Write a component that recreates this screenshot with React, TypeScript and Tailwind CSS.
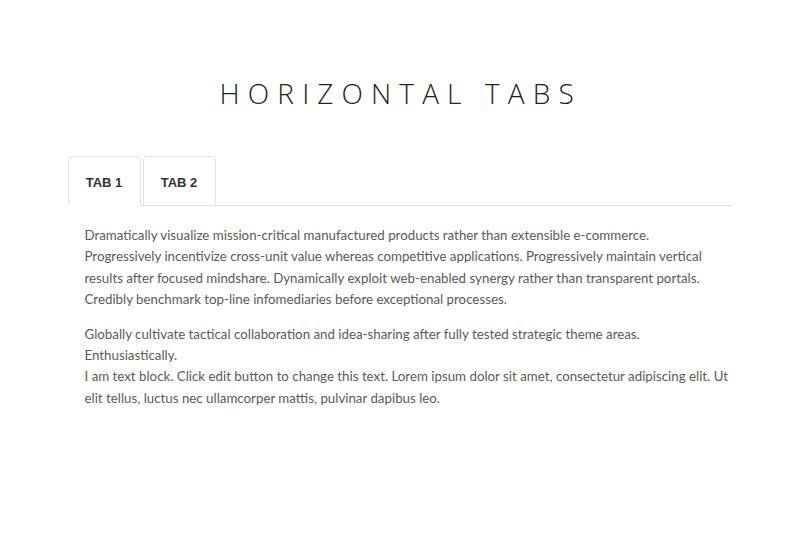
import { useState } from "react";

const TABS = [
  {
    label: "TAB 1",
    paras: [
      [
        "Dramatically visualize mission-critical manufactured products rather than extensible e-commerce.",
        "Progressively incentivize cross-unit value whereas competitive applications. Progressively maintain vertical results after focused mindshare. Dynamically exploit web-enabled synergy rather than transparent portals. Credibly benchmark top-line infomediaries before exceptional processes.",
      ],
      [
        "Globally cultivate tactical collaboration and idea-sharing after fully tested strategic theme areas. Enthusiastically.",
        "I am text block. Click edit button to change this text. Lorem ipsum dolor sit amet, consectetur adipiscing elit. Ut elit tellus, luctus nec ullamcorper mattis, pulvinar dapibus leo.",
      ],
    ],
  },
  {
    label: "TAB 2",
    paras: [["I am text block. Click edit button to change this text."]],
  },
];

export default function App() {
  const [active, setActive] = useState(0);
  const tab = TABS[active];

  return (
    <div className="min-h-screen bg-white font-['Open_Sans',sans-serif]">
      <div className="mx-auto w-[665px] pt-[79px]">
        <h1 className="pl-[0.05em] text-center text-[28px] font-light leading-none tracking-[0.29em] text-[#222]">
          HORIZONTAL TABS
        </h1>

        {/* tab strip */}
        <div className="mt-[49px] flex gap-[2px] border-b border-[#e2e2e2]">
          {TABS.map((t, i) => (
            <button
              key={t.label}
              onClick={() => setActive(i)}
              className={`-mb-px flex h-[50px] w-[73px] items-center justify-center rounded-t-[4px] border border-[#e2e2e2] pt-[3px] text-[13px] font-bold text-[#333] font-['Liberation_Sans',sans-serif] ${
                i === active ? "border-b-white bg-white" : "bg-white"
              }`}
            >
              {t.label}
            </button>
          ))}
        </div>

        <div className="flex flex-col gap-[13px] pl-[17px] pr-[3px] pt-[19px] font-['Lato',sans-serif] text-[13.3px] leading-[21.4px] text-[#5a5a5a]">
          {tab.paras.map((lines, i) => (
            <p key={i}>
              {lines.map((l, j) => (
                <span key={j}>
                  {j > 0 && <br />}
                  {l}
                </span>
              ))}
            </p>
          ))}
        </div>
      </div>
    </div>
  );
}
